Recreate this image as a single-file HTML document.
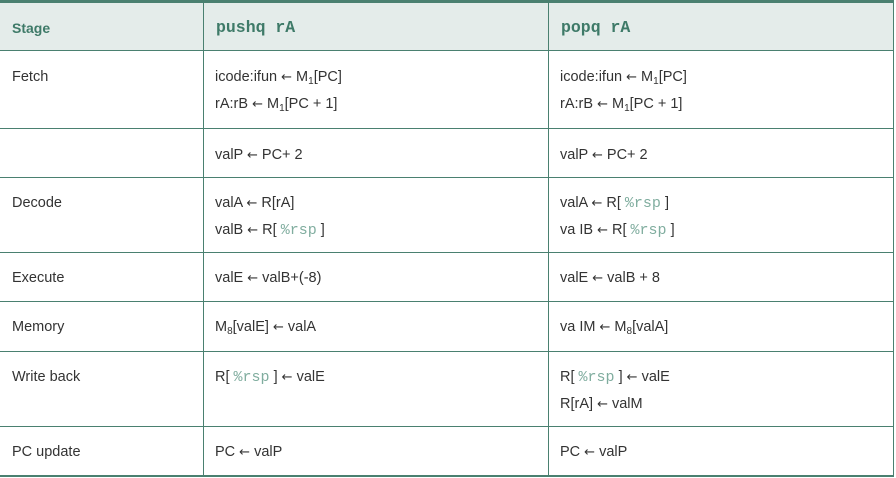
<!DOCTYPE html>
<html><head><meta charset="utf-8"><style>
body{margin:0;width:896px;height:478px;background:#fff;position:relative;overflow:hidden;font-family:"Liberation Sans",sans-serif;font-size:14.5px;color:#333}
.hd{position:absolute;left:0;top:0;width:894px;height:50px;background:#e4ecea;border-top:3px solid #4a8070;box-sizing:border-box}
.h{position:absolute;left:0;height:1px;width:894px;background:#4a8070}
.v{position:absolute;top:0;width:1px;height:477px;background:#4a8070}
.t{position:absolute;line-height:18px;white-space:nowrap}
.th{font-weight:bold;color:#3e7a68;font-size:14px}
.mono{font-family:"Liberation Mono",monospace;font-weight:bold;color:#3e7a68;font-size:16.5px}
.r{font-family:"Liberation Mono",monospace;color:#80ad9f;font-size:15px}
.a{font-family:"DejaVu Sans",sans-serif;font-size:13px}
sub{font-size:10px;vertical-align:-3px;line-height:0}
</style></head><body>
<div class="hd"></div>
<div class="h" style="top:50px"></div>
<div class="h" style="top:128px"></div>
<div class="h" style="top:177px"></div>
<div class="h" style="top:252px"></div>
<div class="h" style="top:301px"></div>
<div class="h" style="top:351px"></div>
<div class="h" style="top:426px"></div>
<div class="h" style="top:475px;height:2px"></div>
<div class="v" style="left:203px"></div>
<div class="v" style="left:548px"></div>
<div class="v" style="left:893px"></div>

<div class="t th" style="left:12px;top:19px">Stage</div>
<div class="t mono" style="left:216px;top:19px">pushq rA</div>
<div class="t mono" style="left:561px;top:19px">popq rA</div>

<div class="t" style="left:12px;top:68px">Fetch</div>
<div class="t" style="left:215px;top:68px">icode:ifun <span class="a">←</span> M<sub>1</sub>[PC]</div>
<div class="t" style="left:215px;top:95px">rA:rB <span class="a">←</span> M<sub>1</sub>[PC + 1]</div>
<div class="t" style="left:560px;top:68px">icode:ifun <span class="a">←</span> M<sub>1</sub>[PC]</div>
<div class="t" style="left:560px;top:95px">rA:rB <span class="a">←</span> M<sub>1</sub>[PC + 1]</div>

<div class="t" style="left:215px;top:146px">valP <span class="a">←</span> PC+ 2</div>
<div class="t" style="left:560px;top:146px">valP <span class="a">←</span> PC+ 2</div>

<div class="t" style="left:12px;top:194px">Decode</div>
<div class="t" style="left:215px;top:194px">valA <span class="a">←</span> R[rA]</div>
<div class="t" style="left:215px;top:221px">valB <span class="a">←</span> R[ <span class="r">%rsp</span> ]</div>
<div class="t" style="left:560px;top:194px">valA <span class="a">←</span> R[ <span class="r">%rsp</span> ]</div>
<div class="t" style="left:560px;top:221px">va IB <span class="a">←</span> R[ <span class="r">%rsp</span> ]</div>

<div class="t" style="left:12px;top:269px">Execute</div>
<div class="t" style="left:215px;top:269px">valE <span class="a">←</span> valB+(-8)</div>
<div class="t" style="left:560px;top:269px">valE <span class="a">←</span> valB + 8</div>

<div class="t" style="left:12px;top:318px">Memory</div>
<div class="t" style="left:215px;top:318px">M<sub>8</sub>[valE] <span class="a">←</span> valA</div>
<div class="t" style="left:560px;top:318px">va IM <span class="a">←</span> M<sub>8</sub>[valA]</div>

<div class="t" style="left:12px;top:368px">Write back</div>
<div class="t" style="left:215px;top:368px">R[ <span class="r">%rsp</span> ] <span class="a">←</span> valE</div>
<div class="t" style="left:560px;top:368px">R[ <span class="r">%rsp</span> ] <span class="a">←</span> valE</div>
<div class="t" style="left:560px;top:395px">R[rA] <span class="a">←</span> valM</div>

<div class="t" style="left:12px;top:443px">PC update</div>
<div class="t" style="left:215px;top:443px">PC <span class="a">←</span> valP</div>
<div class="t" style="left:560px;top:443px">PC <span class="a">←</span> valP</div>
</body></html>
